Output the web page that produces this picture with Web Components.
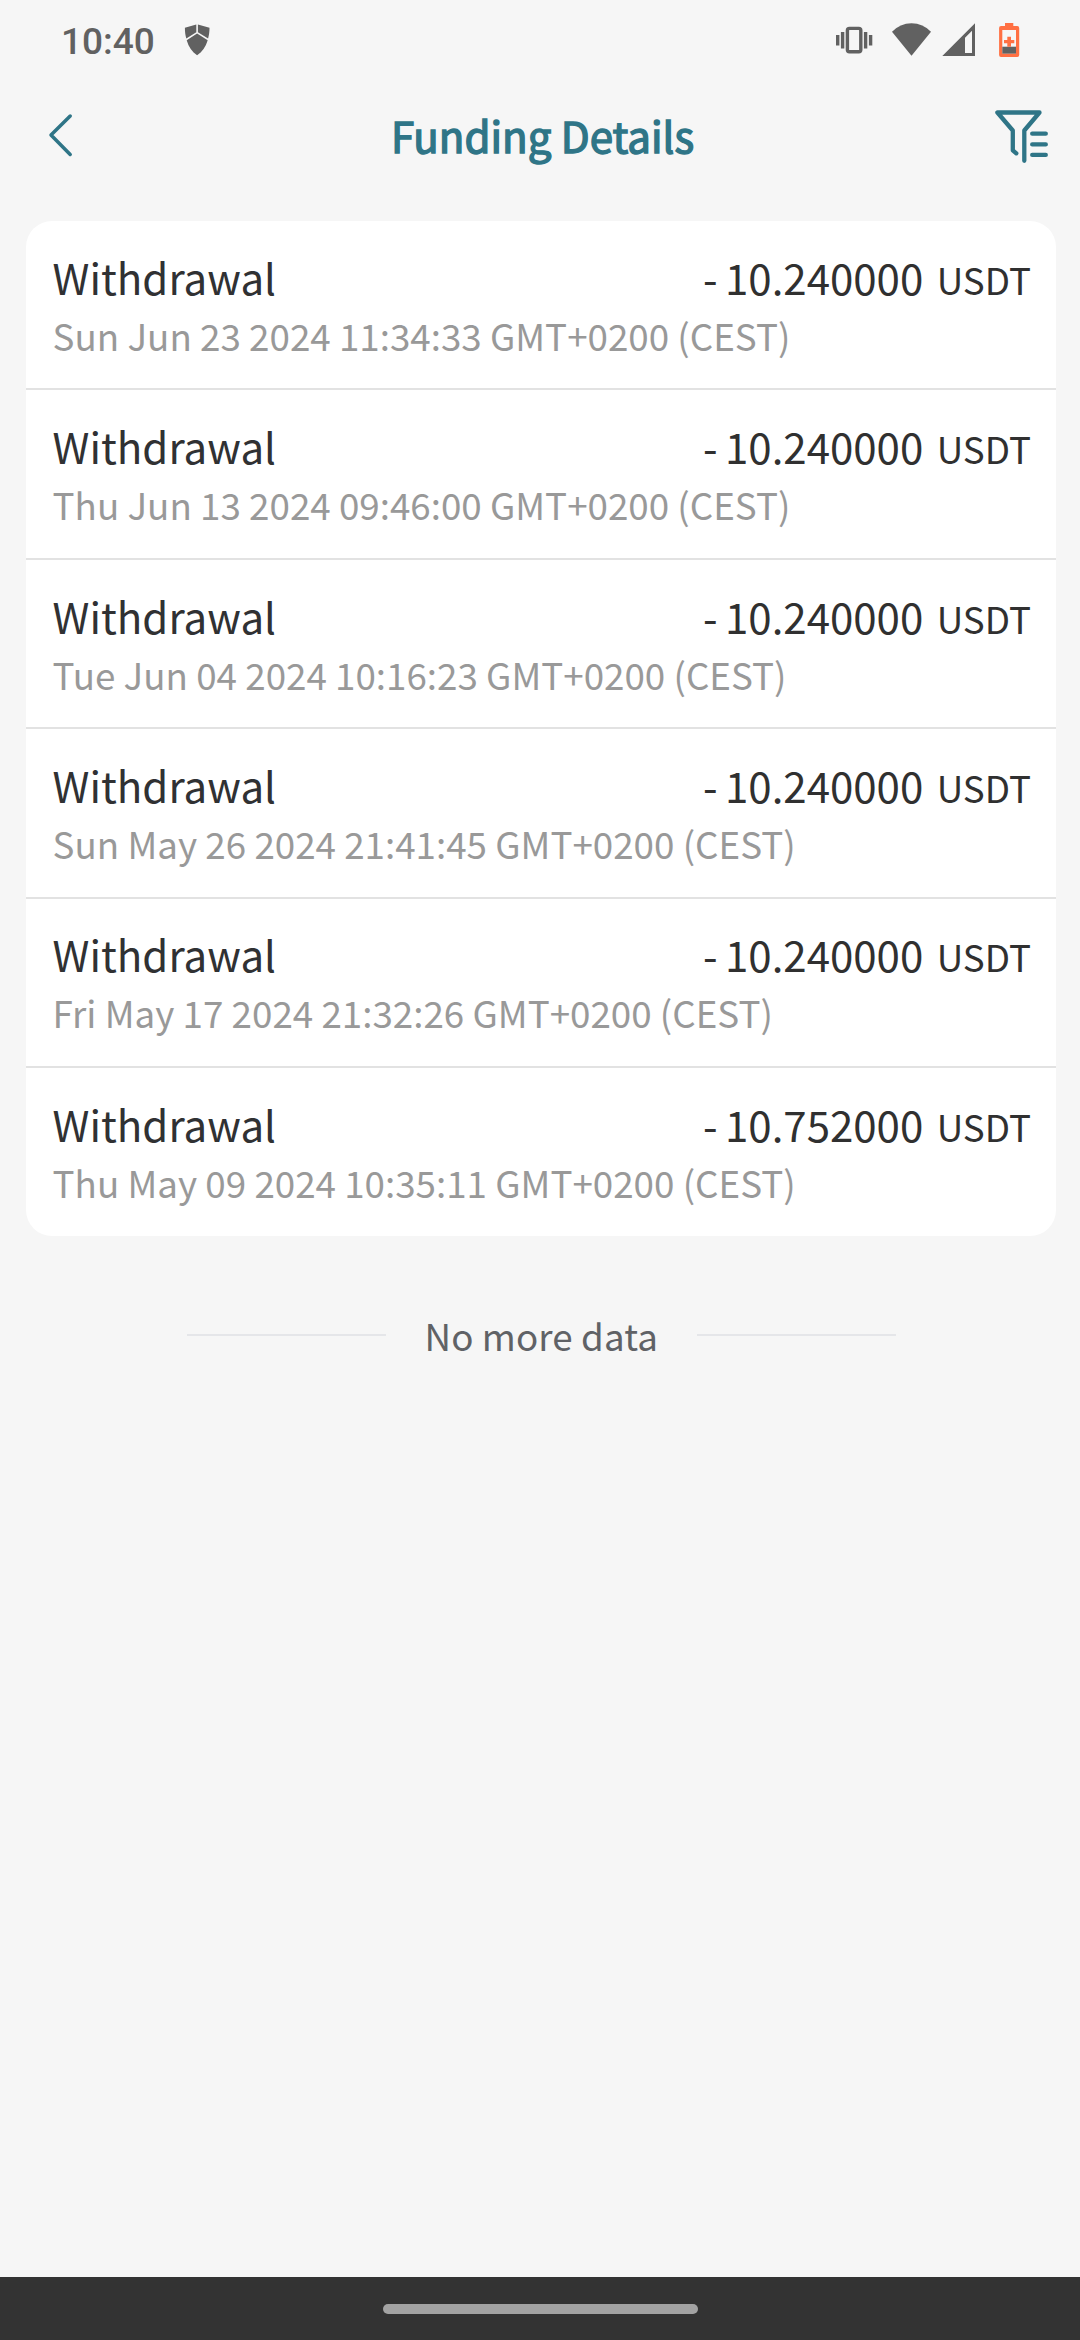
<!DOCTYPE html>
<html lang="en">
<head>
<meta charset="utf-8">
<title>Funding Details</title>
<style>
html,body{margin:0;height:100%}
body{background:#f6f6f6;font-family:"Noto Sans CJK SC","Noto Sans",sans-serif;color:#303133}
</style>
</head>
<body>
<funding-app></funding-app>
<script>
const define = (name, html, setup) => {
  const t = document.createElement('template');
  t.innerHTML = html;
  customElements.define(name, class extends HTMLElement {
    connectedCallback() {
      if (this.shadowRoot) return;
      const root = this.attachShadow({mode: 'open'});
      root.append(t.content.cloneNode(true));
      if (setup) setup(this, root);
    }
  });
};

define('status-bar', `
<style>
:host{display:flex;align-items:flex-start;height:80px;box-sizing:border-box;padding:22px 60px 0 61px;color:#616161;font-family:Roboto,sans-serif}
time{font-size:37px;font-weight:500;line-height:40px;width:122px}
svg{display:block;flex:none}
.grow{flex:1}
.vibrate{margin-right:18px}.wifi{margin-right:10px}.signal{margin-right:22px}
</style>
<time>10:40</time>
<svg width="28" height="36" viewBox="183 22 28 36"><path fill="currentColor" d="M196.3 24.4V32.2L186.3 38.6C185.3 35 184.9 31.5 184.9 27.8ZM197.9 24.4L209.5 27.8C209.5 31.5 209.1 35 208.1 38.6L197.9 32.2ZM197.1 33.6L207.7 40.2C205.7 46.8 202.2 52 197.1 55.2C192.1 52 188.6 46.8 186.7 40.2Z"/></svg>
<span class="grow"></span>
<svg class="vibrate" width="38" height="36" viewBox="835 22 38 36"><g fill="none" stroke="currentColor"><rect x="847.4" y="28.4" width="13.4" height="23.4" rx="2" stroke-width="3.4"/><path stroke-width="3.4" d="M842.6 32v16.5M837.7 35v10.5M865.6 32v16.5M870.6 35v10.5"/></g></svg>
<svg class="wifi" width="41" height="36" viewBox="891 22 41 36"><path fill="currentColor" d="M892 31.8Q900 23.2 911.5 23.2T931 31.8L911.5 55.7Z"/></svg>
<svg class="signal" width="34" height="36" viewBox="942 22 34 36"><path fill="currentColor" fill-rule="evenodd" d="M942.3 56L975 23.3V56ZM965 37.7V53H972V30.7Z"/></svg>
<svg width="22" height="36" viewBox="998 22 22 36"><path fill="#ff7043" fill-rule="evenodd" d="M1005 23h8.3v3h4a2 2 0 0 1 1.9 2v27a2 2 0 0 1-1.9 2h-16.3a2 2 0 0 1-1.9-2v-27a2 2 0 0 1 1.9-2h4ZM1002.3 30v23.6h13.7V30Z"/><path fill="#616161" d="M1002.3 46.7h13.7v6.9h-13.7Z"/><path fill="#ff7043" d="M1007.3 36.7h3.7v3.3h3.3v3.3h-3.3v3.4h-3.7v-3.4h-3.3v-3.3h3.3Z"/></svg>
`);

define('nav-header', `
<style>
:host{display:grid;grid-template-columns:60px 1fr 60px;height:114px;align-items:start;padding:0 30px;color:#2f7587}
svg{display:block;fill:none;stroke:currentColor;stroke-linecap:round;stroke-linejoin:round;margin-top:28px}
h1{margin:25px 0 0 5px;text-align:center;font-size:42px;line-height:60px;font-weight:400;-webkit-text-stroke:1.4px currentColor;white-space:nowrap}
.filter{justify-self:end}
</style>
<svg width="60" height="56" viewBox="30 108 60 56"><path stroke-width="3.5" d="M70.2 116L51 135L70.2 154.5"/></svg>
<h1><slot></slot></h1>
<svg class="filter" width="60" height="56" viewBox="990 108 60 56"><path stroke-width="4.3" d="M1016.3 153.3L1012.8 150.3V130.5L997.4 112.5H1039.5L1024.3 130.5V160.8M1032.2 133.7h13.6M1032.2 144.4h13.6M1032.2 154.9h13.6"/></svg>
`);

define('record-list', `
<style>:host{display:block;margin:27px 24px 0 26px;background:#fff;border-radius:26px;overflow:hidden}</style>
<slot></slot>
`);

define('record-item', `
<style>
:host{display:block;box-sizing:border-box;height:169.4px;padding:24.8px 25px 0 26.6px;border-bottom:2px solid #e2e2e2;white-space:nowrap}
:host(:last-of-type){height:168px;border-bottom:0}
.row{display:flex;justify-content:space-between;height:62px;font-size:42px;line-height:61px}
.amount{display:flex;align-items:baseline;color:#303030}
.sign{margin-right:7.4px}
.unit{font-size:36.75px;line-height:54px;margin-left:13.5px}
.date{font-size:36.75px;line-height:54px;color:#999}
</style>
<div class="row"><span class="type">Withdrawal</span><span class="amount"><span class="sign">-</span><span class="value"></span><span class="unit">USDT</span></span></div>
<div class="date"><slot></slot></div>
`, (host, root) => { root.querySelector('.value').textContent = host.getAttribute('amount'); });

define('list-end', `
<style>
:host{display:flex;align-items:center;justify-content:center;margin-top:71px;height:56px;padding-left:2px;font-size:36.75px;line-height:56px;letter-spacing:.1px;color:#606266;white-space:nowrap}
i{width:199px;height:2px;background:#e5e6e9}
span{margin:0 38.4px 0 39px}
</style>
<i></i><span><slot></slot></span><i></i>
`);

define('gesture-bar', `
<style>:host{display:flex;justify-content:center;align-items:flex-start;height:63px;background:#333;margin-top:auto;box-sizing:border-box;padding-top:27px}
i{width:315px;height:10px;border-radius:5px;background:#a3a3a3}</style><i></i>
`);

define('funding-app', `
<style>:host{display:flex;flex-direction:column;width:1080px;height:2340px;background:#f6f6f6;overflow:hidden}</style>
<status-bar></status-bar>
<nav-header>Funding Details</nav-header>
<record-list>
<record-item amount="10.240000">Sun Jun 23 2024 11:34:33 GMT+0200 (CEST)</record-item>
<record-item amount="10.240000">Thu Jun 13 2024 09:46:00 GMT+0200 (CEST)</record-item>
<record-item amount="10.240000">Tue Jun 04 2024 10:16:23 GMT+0200 (CEST)</record-item>
<record-item amount="10.240000">Sun May 26 2024 21:41:45 GMT+0200 (CEST)</record-item>
<record-item amount="10.240000">Fri May 17 2024 21:32:26 GMT+0200 (CEST)</record-item>
<record-item amount="10.752000">Thu May 09 2024 10:35:11 GMT+0200 (CEST)</record-item>
</record-list>
<list-end>No more data</list-end>
<gesture-bar></gesture-bar>
`);
</script>
</body>
</html>
